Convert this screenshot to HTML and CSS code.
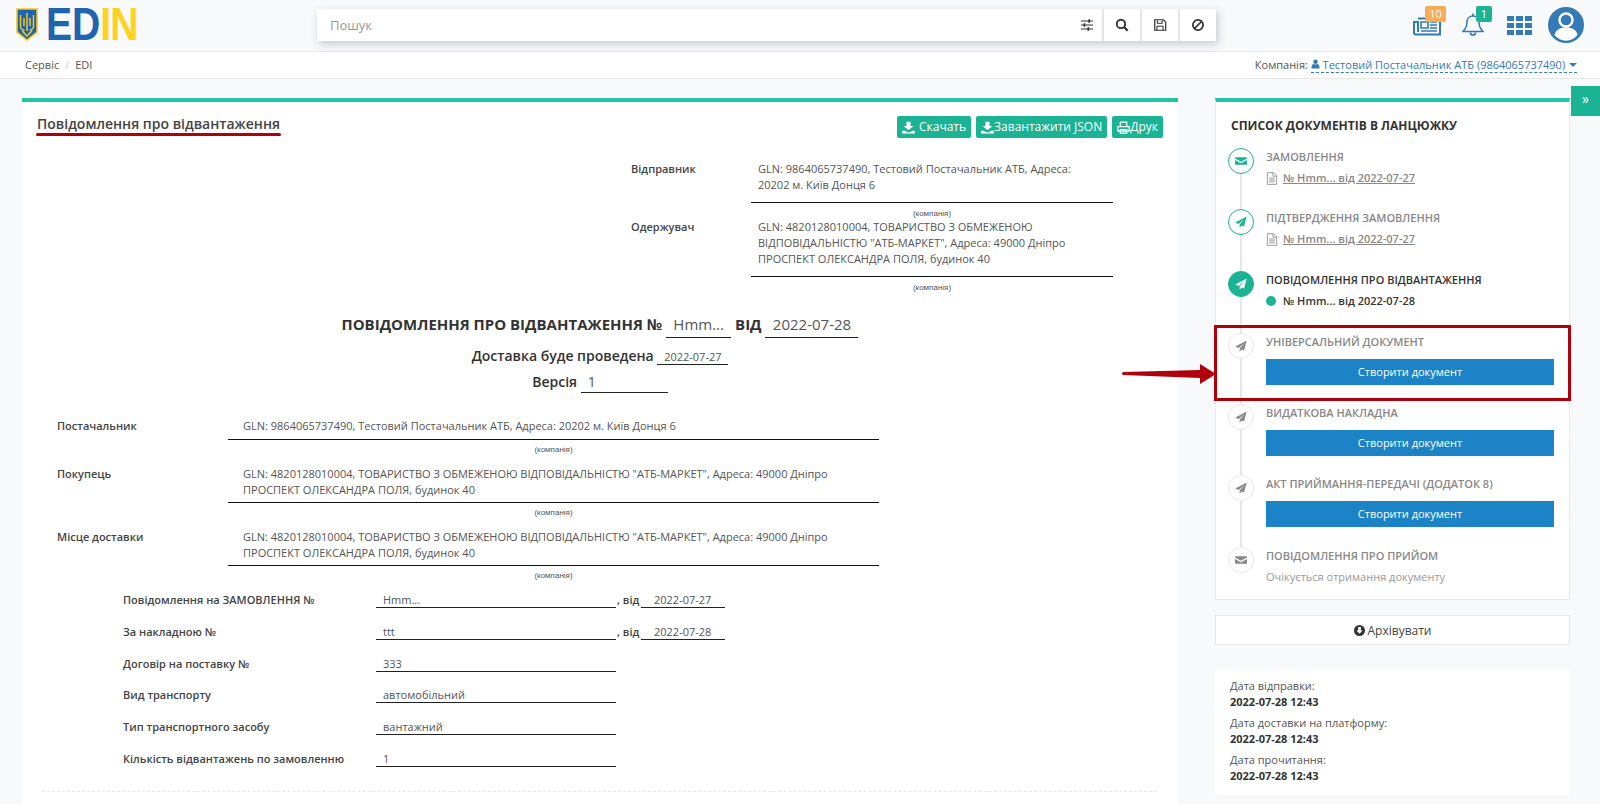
FILE: index.html
```html
<!DOCTYPE html>
<html lang="uk">
<head>
    <meta charset="UTF-8">
    <meta name="viewport" content="width=device-width, initial-scale=1.0">
    <title>Повідомлення про відвантаження</title>
    <link rel="stylesheet" href="styles.css">
</head>
<body>
    <header class="topbar">
        <div class="logo">
            <svg class="logo-shield" viewBox="0 0 22 33">
                <path d="M1 1h20v23l-10 8-10-8z" fill="#1f64ae" stroke="#f5c518" stroke-width="1.6"/>
                <path d="M11 5v18M4.500 7v11c0 3 2.500 4 4 4M17.500 7v11c0 3-2.500 4-4 4M8 10v8M14 10v8M6 23c2 1 3 3 5 5 2-2 3-4 5-5" fill="none" stroke="#f5c518" stroke-width="1.500"/>
            </svg>
            <span class="logo-text"><span class="logo-blue">ED</span><span class="logo-yellow">IN</span></span>
        </div>
        <div class="search">
            <div class="search-input">
                <span class="search-hint">Пошук</span>
                <svg class="icon-md" viewBox="0 0 16 16"><path d="M1 3.500h14M1 8h14M1 12.500h14" stroke="#333" stroke-width="1.200"/><path d="M9.500 1.500h2v4h-2zM4 6h2v4H4zM8.500 10.500h2v4h-2z" fill="#333"/></svg>
            </div>
            <div class="search-btn"><svg class="icon-md" viewBox="0 0 16 16"><circle cx="6.800" cy="6.800" r="4.800" fill="none" stroke="#333" stroke-width="2.200"/><path d="M10.500 10.500l4 4" stroke="#333" stroke-width="2.600"/></svg></div>
            <div class="search-btn"><svg class="icon-md" viewBox="0 0 16 16"><path d="M2 2h10l2.500 2.500V14H2z" fill="none" stroke="#333" stroke-width="1.400"/><path d="M5 2.500v3.500h5.500V2.500M4.500 14V9.500h7V14" fill="none" stroke="#333" stroke-width="1.200"/></svg></div>
            <div class="search-btn"><svg class="icon-md" viewBox="0 0 16 16"><circle cx="8" cy="8" r="5.800" fill="none" stroke="#333" stroke-width="2"/><path d="M4 12l8-8" stroke="#333" stroke-width="2"/></svg></div>
        </div>
        <div class="top-icons">
            <div class="top-icon top-news">
                <svg class="news-icon" viewBox="0 0 28 19"><path d="M5 1.500h22v16H3a2 2 0 01-2-2V5h4v10" fill="none" stroke="#337ab7" stroke-width="2"/><path d="M8 5h7v6H8zM17 5h7M17 8h7M17 11h7M8 14h16" fill="none" stroke="#337ab7" stroke-width="1.600"/></svg>
                <span class="badge badge-orange">10</span>
            </div>
            <div class="top-icon top-bell">
                <svg class="bell-icon" viewBox="0 0 22 23"><path d="M11 3c-4 0-6 3-6 6 0 5-1.500 7-4 9.500h20c-2.500-2.500-4-4.500-4-9.500 0-3-2-6-6-6z" fill="none" stroke="#337ab7" stroke-width="1.500"/><path d="M8.500 19.500a2.500 2.500 0 005 0M11 .5v2.500" fill="none" stroke="#337ab7" stroke-width="1.700"/></svg>
                <span class="badge badge-green">1</span>
            </div>
            <div class="grid-icon">
                <i></i><i></i><i></i><i></i><i></i><i></i><i></i><i></i><i></i>
            </div>
            <svg class="avatar" viewBox="0 0 36 36">
                <circle cx="18" cy="18" r="18" fill="#337ab7"/>
                <path d="M6.500 28c1-5 5-7.500 11.500-7.500S28.500 23 29.500 28a14.500 14.500 0 01-23 0z" fill="#fff"/>
                <circle cx="18" cy="13" r="6.500" fill="#337ab7" stroke="#fff" stroke-width="2.400"/>
            </svg>
        </div>
    </header>

    <nav class="crumbs">
        <div class="crumb-path"><span>Сервіс</span><span class="crumb-sep">/</span><span>EDI</span></div>
        <div class="company">
            <span>Компанія:</span>
            <a class="company-link">
                <svg class="icon-xs" viewBox="0 0 12 13"><circle cx="6" cy="3.500" r="3" fill="#337ab7"/><path d="M.5 12.500c0-4 1.500-6 3-6 1 .7 4 .7 5 0 1.500 0 3 2 3 6z" fill="#337ab7"/></svg>
                Тестовий Постачальник АТБ (9864065737490)
                <span class="caret"></span>
            </a>
        </div>
    </nav>

    <div class="toggle-btn">»</div>

    <main class="page">
        <section class="doc">
            <div class="doc-top">
                <h2 class="doc-title">Повідомлення про відвантаження</h2>
                <div class="doc-actions">
                    <a class="btn-green">
                        <svg class="icon-sm" viewBox="0 0 16 16"><path d="M5.500 1h5v5H14l-6 5.500L2 6h3.500zM0 12h4l2 1.800h4L12 12h4v3.500H0z" fill="#fff"/></svg>
                        Скачать
                    </a>
                    <a class="btn-green btn-tight">
                        <svg class="icon-sm" viewBox="0 0 16 16"><path d="M5.500 1h5v5H14l-6 5.500L2 6h3.500zM0 12h4l2 1.800h4L12 12h4v3.500H0z" fill="#fff"/></svg>
                        Завантажити JSON
                    </a>
                    <a class="btn-green btn-tight">
                        <svg class="icon-sm" viewBox="0 0 16 16"><path d="M4 1.500h8v5M4 6.500v-5M1 7h14v5.500H1zM4 10.500h8v4.500H4z" fill="none" stroke="#fff" stroke-width="1.500"/></svg>
                        Друк
                    </a>
                </div>
            </div>

            <div class="parties">
                <div class="party">
                    <div class="label">Відправник</div>
                    <div class="party-value">GLN: 9864065737490, Тестовий Постачальник АТБ, Адреса: 20202 м. Київ Донця 6</div>
                </div>
                <div class="hint hint-small">(компанія)</div>
                <div class="party">
                    <div class="label">Одержувач</div>
                    <div class="party-value">GLN: 4820128010004, ТОВАРИСТВО З ОБМЕЖЕНОЮ ВІДПОВІДАЛЬНІСТЮ "АТБ-МАРКЕТ", Адреса: 49000 Дніпро ПРОСПЕКТ ОЛЕКСАНДРА ПОЛЯ, будинок 40</div>
                </div>
                <div class="hint hint-small">(компанія)</div>
            </div>

            <div class="doc-heading">
                <div class="heading-main">ПОВІДОМЛЕННЯ ПРО ВІДВАНТАЖЕННЯ № <span class="fill fill-num">Hmm...</span> ВІД <span class="fill fill-date">2022-07-28</span></div>
                <div class="heading-sub">Доставка буде проведена <span class="fill fill-delivery">2022-07-27</span></div>
                <div class="heading-sub heading-version">Версія <span class="fill fill-version">1</span></div>
            </div>

            <div class="members">
                <div class="member">
                    <div class="label">Постачальник</div>
                    <div class="member-value member-value-one">GLN: 9864065737490, Тестовий Постачальник АТБ, Адреса: 20202 м. Київ Донця 6</div>
                </div>
                <div class="hint">(компанія)</div>
                <div class="member">
                    <div class="label">Покупець</div>
                    <div class="member-value">GLN: 4820128010004, ТОВАРИСТВО З ОБМЕЖЕНОЮ ВІДПОВІДАЛЬНІСТЮ "АТБ-МАРКЕТ", Адреса: 49000 Дніпро ПРОСПЕКТ ОЛЕКСАНДРА ПОЛЯ, будинок 40</div>
                </div>
                <div class="hint">(компанія)</div>
                <div class="member">
                    <div class="label">Місце доставки</div>
                    <div class="member-value">GLN: 4820128010004, ТОВАРИСТВО З ОБМЕЖЕНОЮ ВІДПОВІДАЛЬНІСТЮ "АТБ-МАРКЕТ", Адреса: 49000 Дніпро ПРОСПЕКТ ОЛЕКСАНДРА ПОЛЯ, будинок 40</div>
                </div>
                <div class="hint">(компанія)</div>
            </div>

            <div class="refs">
                <div class="label">Повідомлення на ЗАМОВЛЕННЯ №</div>
                <div class="ref-value">Hmm...</div>
                <div class="label ref-from">, від</div>
                <div class="ref-value ref-date">2022-07-27</div>

                <div class="label">За накладною №</div>
                <div class="ref-value">ttt</div>
                <div class="label ref-from">, від</div>
                <div class="ref-value ref-date">2022-07-28</div>

                <div class="label">Договір на поставку №</div>
                <div class="ref-value ref-wide">333</div>

                <div class="label">Вид транспорту</div>
                <div class="ref-value ref-wide">автомобільний</div>

                <div class="label">Тип транспортного засобу</div>
                <div class="ref-value ref-wide">вантажний</div>

                <div class="label">Кількість відвантажень по замовленню</div>
                <div class="ref-value ref-wide">1</div>
            </div>

            <div class="doc-divider"></div>
        </section>

        <aside class="side">
            <div class="chain">
                <h3 class="chain-title">Список документів в ланцюжку</h3>

                <div class="step step-first">
                    <div class="step-mark">
                        <span class="dot dot-done"><svg class="icon-dot" viewBox="0 0 16 16"><path d="M1 3h14a1 1 0 011 1v.5L8 9 0 4.500V4a1 1 0 011-1zM0 6.500l8 4.500 8-4.500V12a1 1 0 01-1 1H1a1 1 0 01-1-1z"/></svg></span>
                        <span class="step-line"></span>
                    </div>
                    <div class="step-body">
                        <div class="step-name">Замовлення</div>
                        <a class="step-link">
                            <svg class="icon-file" viewBox="0 0 12 14"><path d="M1 .7h6.500L11 4v9.300H1zM7 1v3.500h4M3 6.500h6M3 8.500h6M3 10.500h6" fill="none" stroke="#888" stroke-width=".9"/></svg>
                            <span class="step-ref">№ Hmm... від 2022-07-27</span>
                        </a>
                    </div>
                </div>

                <div class="step">
                    <div class="step-mark">
                        <span class="dot dot-done"><svg class="icon-dot" viewBox="0 0 16 16"><path d="M15.500.5L.5 8.800l4.300 1.800L13 3.500l-6.800 7.800v4.200l2.600-3 3.300 1.400z"/></svg></span>
                        <span class="step-line"></span>
                    </div>
                    <div class="step-body">
                        <div class="step-name">Підтвердження замовлення</div>
                        <a class="step-link">
                            <svg class="icon-file" viewBox="0 0 12 14"><path d="M1 .7h6.500L11 4v9.300H1zM7 1v3.500h4M3 6.500h6M3 8.500h6M3 10.500h6" fill="none" stroke="#888" stroke-width=".9"/></svg>
                            <span class="step-ref">№ Hmm... від 2022-07-27</span>
                        </a>
                    </div>
                </div>

                <div class="step">
                    <div class="step-mark">
                        <span class="dot dot-active"><svg class="icon-dot" viewBox="0 0 16 16"><path d="M15.500.5L.5 8.800l4.300 1.800L13 3.500l-6.800 7.800v4.200l2.600-3 3.300 1.400z"/></svg></span>
                        <span class="step-line"></span>
                    </div>
                    <div class="step-body">
                        <div class="step-name step-name-active">Повідомлення про відвантаження</div>
                        <div class="step-current"><span class="current-dot"></span>№ Hmm... від 2022-07-28</div>
                    </div>
                </div>

                <div class="step step-action">
                    <div class="step-mark">
                        <span class="dot"><svg class="icon-dot" viewBox="0 0 16 16"><path d="M15.500.5L.5 8.800l4.300 1.800L13 3.500l-6.800 7.800v4.200l2.600-3 3.300 1.400z"/></svg></span>
                        <span class="step-line"></span>
                    </div>
                    <div class="step-body">
                        <div class="step-name">Універсальний документ</div>
                        <a class="btn-blue">Створити документ</a>
                    </div>
                </div>

                <div class="step step-action">
                    <div class="step-mark">
                        <span class="dot"><svg class="icon-dot" viewBox="0 0 16 16"><path d="M15.500.5L.5 8.800l4.300 1.800L13 3.500l-6.800 7.800v4.200l2.600-3 3.300 1.400z"/></svg></span>
                        <span class="step-line"></span>
                    </div>
                    <div class="step-body">
                        <div class="step-name">Видаткова накладна</div>
                        <a class="btn-blue">Створити документ</a>
                    </div>
                </div>

                <div class="step step-action step-tall">
                    <div class="step-mark">
                        <span class="dot"><svg class="icon-dot" viewBox="0 0 16 16"><path d="M15.500.5L.5 8.800l4.300 1.800L13 3.500l-6.800 7.800v4.200l2.600-3 3.300 1.400z"/></svg></span>
                        <span class="step-line"></span>
                    </div>
                    <div class="step-body">
                        <div class="step-name">Акт приймання-передачі (Додаток 8)</div>
                        <a class="btn-blue">Створити документ</a>
                    </div>
                </div>

                <div class="step step-last">
                    <div class="step-mark">
                        <span class="dot"><svg class="icon-dot" viewBox="0 0 16 16"><path d="M1 3h14a1 1 0 011 1v.5L8 9 0 4.500V4a1 1 0 011-1zM0 6.500l8 4.500 8-4.500V12a1 1 0 01-1 1H1a1 1 0 01-1-1z"/></svg></span>
                    </div>
                    <div class="step-body">
                        <div class="step-name">Повідомлення про прийом</div>
                        <div class="step-wait">Очікується отримання документу</div>
                    </div>
                </div>

                <div class="red-box"></div>
                <svg class="red-arrow" viewBox="0 0 94 20"><path d="M1.500 8L78 6V0l16 10-16 10v-6L1.500 11a1.500 1.500 0 010-3z" fill="#b0000b"/></svg>
            </div>

            <a class="archive">
                <svg class="icon-arch" viewBox="0 0 16 16"><path fill-rule="evenodd" d="M8 0a8 8 0 110 16A8 8 0 018 0zM6 3v5H3.500L8 12.800 12.500 8H10V3z" fill="#333"/></svg>
                Архівувати
            </a>

            <div class="dates">
                <div class="date-item">Дата відправки:<b>2022-07-28 12:43</b></div>
                <div class="date-item">Дата доставки на платформу:<b>2022-07-28 12:43</b></div>
                <div class="date-item">Дата прочитання:<b>2022-07-28 12:43</b></div>
            </div>
        </aside>
    </main>
</body>
</html>
```
FILE: styles.css
```css
html, body {
    height: 804px;
    overflow: hidden;
}
body {
    margin: 0;
    font-family: "Open Sans", sans-serif;
    font-size: 11px;
    line-height: 16px;
    color: #555;
    background-color: #f8f9fb;
    position: relative;
}
a {
    color: inherit;
}
h2, h3 {
    margin: 0;
}

/* top bar */
.topbar {
    height: 51px;
    display: flex;
    border-bottom: 1px solid #e7e7ea;
}
.logo {
    width: 317px;
    padding-left: 16px;
    box-sizing: border-box;
    display: flex;
    align-items: flex-start;
    padding-top: 8px;
}
.logo-shield {
    width: 22px;
    height: 33px;
}
.logo-text {
    display: inline-block;
    margin-left: 8px;
    font-family: "Liberation Sans", sans-serif;
    font-weight: bold;
    font-size: 46px;
    line-height: 33px;
    transform: scaleX(0.85);
    transform-origin: left center;
}
.logo-blue {
    color: #1f64ae;
}
.logo-yellow {
    color: #ffd21f;
    letter-spacing: -1px;
}
.search {
    width: 899px;
    height: 32px;
    margin-top: 9px;
    display: flex;
    gap: 2px;
    background: #e6e6e8;
    box-shadow: 2px 3px 8px rgba(60, 60, 90, 0.25);
}
.search-input {
    flex: 1;
    background: #fff;
    display: flex;
    align-items: center;
    justify-content: space-between;
    padding: 0 8px 0 13px;
}
.search-hint {
    font-size: 13px;
    color: #999;
}
.search-btn {
    width: 36px;
    background: #fff;
    display: flex;
    align-items: center;
    justify-content: center;
}
.icon-md {
    width: 14px;
    height: 14px;
}
.top-icons {
    flex: 1;
    display: flex;
    position: relative;
}
.top-icon {
    position: relative;
}
.top-news {
    margin: 17px 0 0 197px;
}
.news-icon {
    width: 28px;
    height: 19px;
    display: block;
}
.top-bell {
    margin: 13px 0 0 21px;
}
.bell-icon {
    width: 22px;
    height: 23px;
    display: block;
}
.badge {
    position: absolute;
    top: -11px;
    height: 16px;
    padding: 0 4px;
    border-radius: 2px;
    color: #fff;
    font-size: 11px;
    line-height: 16px;
    text-align: center;
}
.top-bell .badge {
    top: -7px;
    left: 14px;
    width: 8px;
}
.top-news .badge {
    left: 12px;
    width: 13px;
}
.badge-orange {
    background: #f8ac59;
}
.badge-green {
    background: #1ab394;
}
.grid-icon {
    margin: 16px 0 0 23px;
    width: 25px;
    height: 19px;
    display: grid;
    grid-template-columns: repeat(3, 7px);
    grid-template-rows: repeat(3, 5px);
    gap: 2px 2px;
}
.grid-icon i {
    background: #337ab7;
}
.avatar {
    width: 36px;
    height: 36px;
    margin: 7px 0 0 16px;
}

/* breadcrumb line */
.crumbs {
    height: 26px;
    display: flex;
    justify-content: space-between;
    align-items: center;
    padding: 0 23px 0 25px;
    background: #fff;
    border-bottom: 1px solid #e7e7ea;
}
.crumb-path {
    display: flex;
    gap: 6px;
}
.crumb-sep {
    color: #ccc;
}
.company-link {
    color: #337ab7;
    border-bottom: 1px dashed #337ab7;
}
.icon-xs {
    width: 9px;
    height: 10px;
}
.caret {
    display: inline-block;
    margin-left: 1px;
    vertical-align: 2px;
    border: 4px solid transparent;
    border-top-color: #337ab7;
    border-bottom: 0;
}
.toggle-btn {
    position: absolute;
    top: 86px;
    right: 0;
    width: 29px;
    height: 30px;
    background: #1ab394;
    color: #fff;
    font-size: 14px;
    line-height: 26px;
    text-align: center;
}

/* layout */
.page {
    display: flex;
    gap: 37px;
    padding: 19px 0 0 22px;
}
.doc {
    width: 1156px;
    height: 706px;
    background: #fff;
    border-top: 4px solid #21c4a3;
    flex: none;
    box-sizing: border-box;
}
.doc-top {
    display: flex;
    justify-content: space-between;
    padding: 14px 15px 0;
}
.doc-title {
    position: relative;
    font-size: 14px;
    font-weight: 600;
    line-height: 16px;
    color: #444;
}
.doc-title::after {
    content: "";
    position: absolute;
    left: -1px;
    right: -1px;
    top: 17px;
    height: 3px;
    border-radius: 2px;
    background: #b0000b;
}
.doc-actions {
    display: flex;
    gap: 5px;
}
.btn-green {
    height: 22px;
    padding: 0 5px;
    display: flex;
    align-items: center;
    gap: 4px;
    border-radius: 2px;
    background: #1ab394;
    color: #fff;
    font-size: 12px;
}
.btn-tight {
    gap: 0;
}
.icon-sm {
    width: 13px;
    height: 13px;
}
.label {
    font-weight: 600;
    color: #444;
}

/* sender and receiver */
.parties {
    margin: 23px 0 0 609px;
    width: 504px;
}
.party {
    display: grid;
    grid-template-columns: 120px 362px;
}
.party-value {
    padding: 0 25px 9px 7px;
    border-bottom: 1px solid #111;
}
.hint {
    height: 26px;
    font-family: "Liberation Sans", sans-serif;
    font-size: 8px;
    line-height: 20px;
    color: #555;
    text-align: center;
}
.hint-small {
    height: 16px;
    line-height: 21px;
    padding-left: 120px;
    width: 362px;
}

/* document heading */
.doc-heading {
    text-align: center;
    color: #333;
    font-weight: 600;
    margin-top: 18px;
}
.heading-main {
    font-size: 15px;
    font-weight: 700;
    line-height: 26px;
}
.heading-sub {
    margin-top: 8px;
    font-size: 14px;
    line-height: 20px;
}
.heading-version {
    margin-top: 6px;
}
.fill {
    display: inline-block;
    border-bottom: 1px solid #222;
    font-weight: 400;
    text-align: center;
    color: #555;
}
.fill-num {
    width: 65px;
    font-size: 15px;
}
.fill-date {
    width: 93px;
    font-size: 15px;
}
.fill-delivery {
    width: 71px;
    font-size: 11px;
    line-height: 15px;
}
.fill-version {
    width: 87px;
    font-size: 14px;
    text-align: left;
    padding-left: 7px;
    box-sizing: border-box;
}

/* supplier and buyer */
.members {
    margin: 25px 0 0 35px;
    width: 822px;
}
.member {
    display: grid;
    grid-template-columns: 171px 651px;
}
.member-value {
    padding: 0 40px 4px 15px;
    border-bottom: 1px solid #111;
}
.member-value-one {
    padding-bottom: 5px;
}
.members .hint {
    padding-left: 171px;
}

/* references */
.refs {
    margin-left: 101px;
    display: grid;
    grid-template-columns: 253px 240px 25px 84px;
    grid-auto-rows: 16px;
    row-gap: 15.800px;
}
.ref-value {
    padding-left: 7px;
    line-height: 15px;
    border-bottom: 1px solid #222;
}
.ref-wide {
    grid-column: 2;
}
.refs .label:nth-child(n + 9) {
    grid-column: 1;
}
.ref-from {
    padding-left: 1px;
    white-space: nowrap;
}
.ref-date {
    padding-left: 13px;
}
.doc-divider {
    margin: 24px 21px 0 20px;
    border-top: 1px dashed #e7e7e7;
}

/* chain of documents */
.side {
    width: 355px;
    flex: none;
}
.chain {
    position: relative;
    height: 502px;
    box-sizing: border-box;
    padding: 15px 15px 0 12px;
    background: #fff;
    border: 1px solid #e7eaec;
    border-top: 4px solid #21c4a3;
}
.chain-title {
    padding-left: 3px;
    font-size: 12px;
    line-height: 17px;
    font-weight: 700;
    color: #333;
    text-transform: uppercase;
}
.step {
    display: flex;
    gap: 12px;
    height: 62px;
}
.step-first {
    margin-top: 14px;
    height: 61px;
}
.step-action {
    height: 71px;
}
.step-tall {
    height: 72px;
}
.step-last {
    height: 46px;
}
.step-mark {
    width: 26px;
    flex: none;
    display: flex;
    flex-direction: column;
    align-items: center;
}
.dot {
    width: 26px;
    height: 26px;
    flex: none;
    box-sizing: border-box;
    border-radius: 50%;
    border: 1px solid #e7e7e7;
    background: #fff;
    display: flex;
    align-items: center;
    justify-content: center;
    fill: #888;
}
.dot-done {
    border-color: #1ab394;
    fill: #1ab394;
}
.dot-active {
    background: #1ab394;
    border-color: #1ab394;
    fill: #fff;
}
.icon-dot {
    width: 12px;
    height: 12px;
}
.step-line {
    flex: 1;
    width: 2px;
    background: #e7e7ea;
}
.step-body {
    flex: 1;
    padding-top: 1px;
}
.step-name {
    font-weight: 600;
    color: #888;
    text-transform: uppercase;
}
.step-name-active {
    color: #333;
}
.step-link {
    margin-top: 5px;
    display: flex;
    align-items: center;
    color: #888;
    font-weight: 600;
}
.icon-file {
    width: 12px;
    height: 13px;
    flex: none;
}
.step-ref {
    margin-left: 2px;
    padding-left: 3px;
    text-decoration: underline;
}
.step-current {
    margin-top: 5px;
    display: flex;
    align-items: center;
    font-weight: 600;
    color: #333;
}
.current-dot {
    width: 10px;
    height: 10px;
    margin-right: 7px;
    border-radius: 50%;
    background: #1ab394;
}
.step-wait {
    margin-top: 5px;
    color: #999;
}
.btn-blue {
    margin-top: 9px;
    height: 26px;
    display: block;
    background: #1c84c6;
    color: #fff;
    line-height: 26px;
    text-align: center;
}
.red-box {
    position: absolute;
    left: -2px;
    top: 223px;
    width: 357px;
    height: 76px;
    box-sizing: border-box;
    border: 3px solid #b0000b;
}
.red-arrow {
    position: absolute;
    left: -94px;
    top: 262px;
    width: 94px;
    height: 20px;
}

/* archive button and dates */
.archive {
    margin-top: 15px;
    height: 30px;
    box-sizing: border-box;
    padding-top: 1px;
    display: flex;
    align-items: center;
    justify-content: center;
    gap: 3px;
    background: #fff;
    border: 1px solid #e7e7ea;
    font-size: 12px;
    color: #444;
}
.icon-arch {
    width: 11px;
    height: 11px;
}
.dates {
    margin-top: 25px;
    height: 125px;
    box-sizing: border-box;
    padding: 8px 15px;
    border-radius: 4px;
    background: #fff;
}
.date-item {
    margin-bottom: 5px;
}
.date-item b {
    display: block;
    font-weight: 700;
    color: #333;
}
```
